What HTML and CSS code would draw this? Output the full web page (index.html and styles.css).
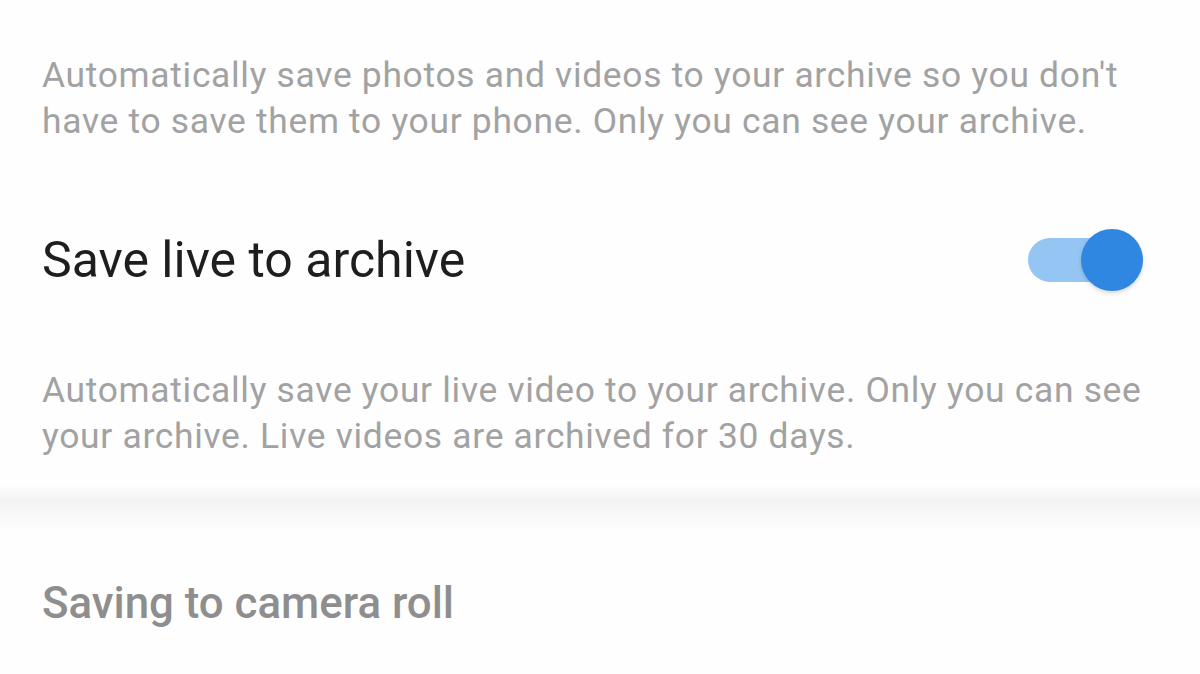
FILE: index.html
```html
<!DOCTYPE html>
<html>
<head>
    <title>Archive Settings</title>
    <link rel="stylesheet" href="styles.css">
</head>
<body>
    <div class="settings">
        <!-- Save story to archive (description only, title scrolled off) -->
        <p class="setting-desc first">Automatically save photos and videos to your archive so you don't have to save them to your phone. Only you can see your archive.</p>

        <!-- Save live to archive -->
        <div class="setting-row">
            <span class="setting-title">Save live to archive</span>
            <div class="toggle on">
                <div class="toggle-track"></div>
                <div class="toggle-knob"></div>
            </div>
        </div>
        <p class="setting-desc">Automatically save your live video to your archive. Only you can see your archive. Live videos are archived for 30 days.</p>

        <!-- Section divider -->
        <div class="section-divider"></div>

        <!-- Next section header -->
        <div class="section-header">Saving to camera roll</div>
    </div>
</body>
</html>
```

FILE: styles.css
```css
/* Base page */
body {
    margin: 0;
    padding: 0;
    width: 1200px;
    height: 674px;
    overflow: hidden;
    background-color: #fefefe;
    font-family: Roboto, "Noto Sans", Arial, sans-serif;
}

.settings {
    display: flex;
    flex-direction: column;
}

/* Descriptions under each toggle */
.setting-desc {
    margin: 57px 0 0 0;
    padding: 0 40px 0 42px;
    font-size: 35.4px;
    line-height: 46px;
    letter-spacing: 0.7px;
    color: #a2a2a2;
}

.setting-desc.first {
    margin-top: 52px;
}

/* Title row with switch */
.setting-row {
    display: flex;
    justify-content: space-between;
    align-items: center;
    height: 100px;
    margin-top: 66px;
    padding: 0 56px 0 42px;
}

.setting-title {
    font-size: 50px;
    color: #1e1e1e;
}

/* Switch */
.toggle {
    position: relative;
    width: 116px;
    height: 64px;
}

.toggle-track {
    position: absolute;
    left: 0;
    top: 10px;
    width: 96px;
    height: 44px;
    border-radius: 22px;
    background-color: #95c6f3;
}

.toggle-knob {
    position: absolute;
    right: 1px;
    top: 1px;
    width: 62px;
    height: 62px;
    border-radius: 50%;
    background-color: #2f87e2;
    box-shadow: 0 2px 4px rgba(0, 0, 0, 0.16);
}

/* Soft band between sections */
.section-divider {
    height: 44px;
    margin-top: 26px;
    background: linear-gradient(to bottom, #fefefe 0%, #f3f3f3 35%, #f7f7f7 60%, #fdfdfd 100%);
}

.section-header {
    margin-top: 49px;
    padding: 0 42px;
    height: 50px;
    line-height: 50px;
    font-size: 43.8px;
    font-weight: 500;
    color: #8e8e8e;
}
```
